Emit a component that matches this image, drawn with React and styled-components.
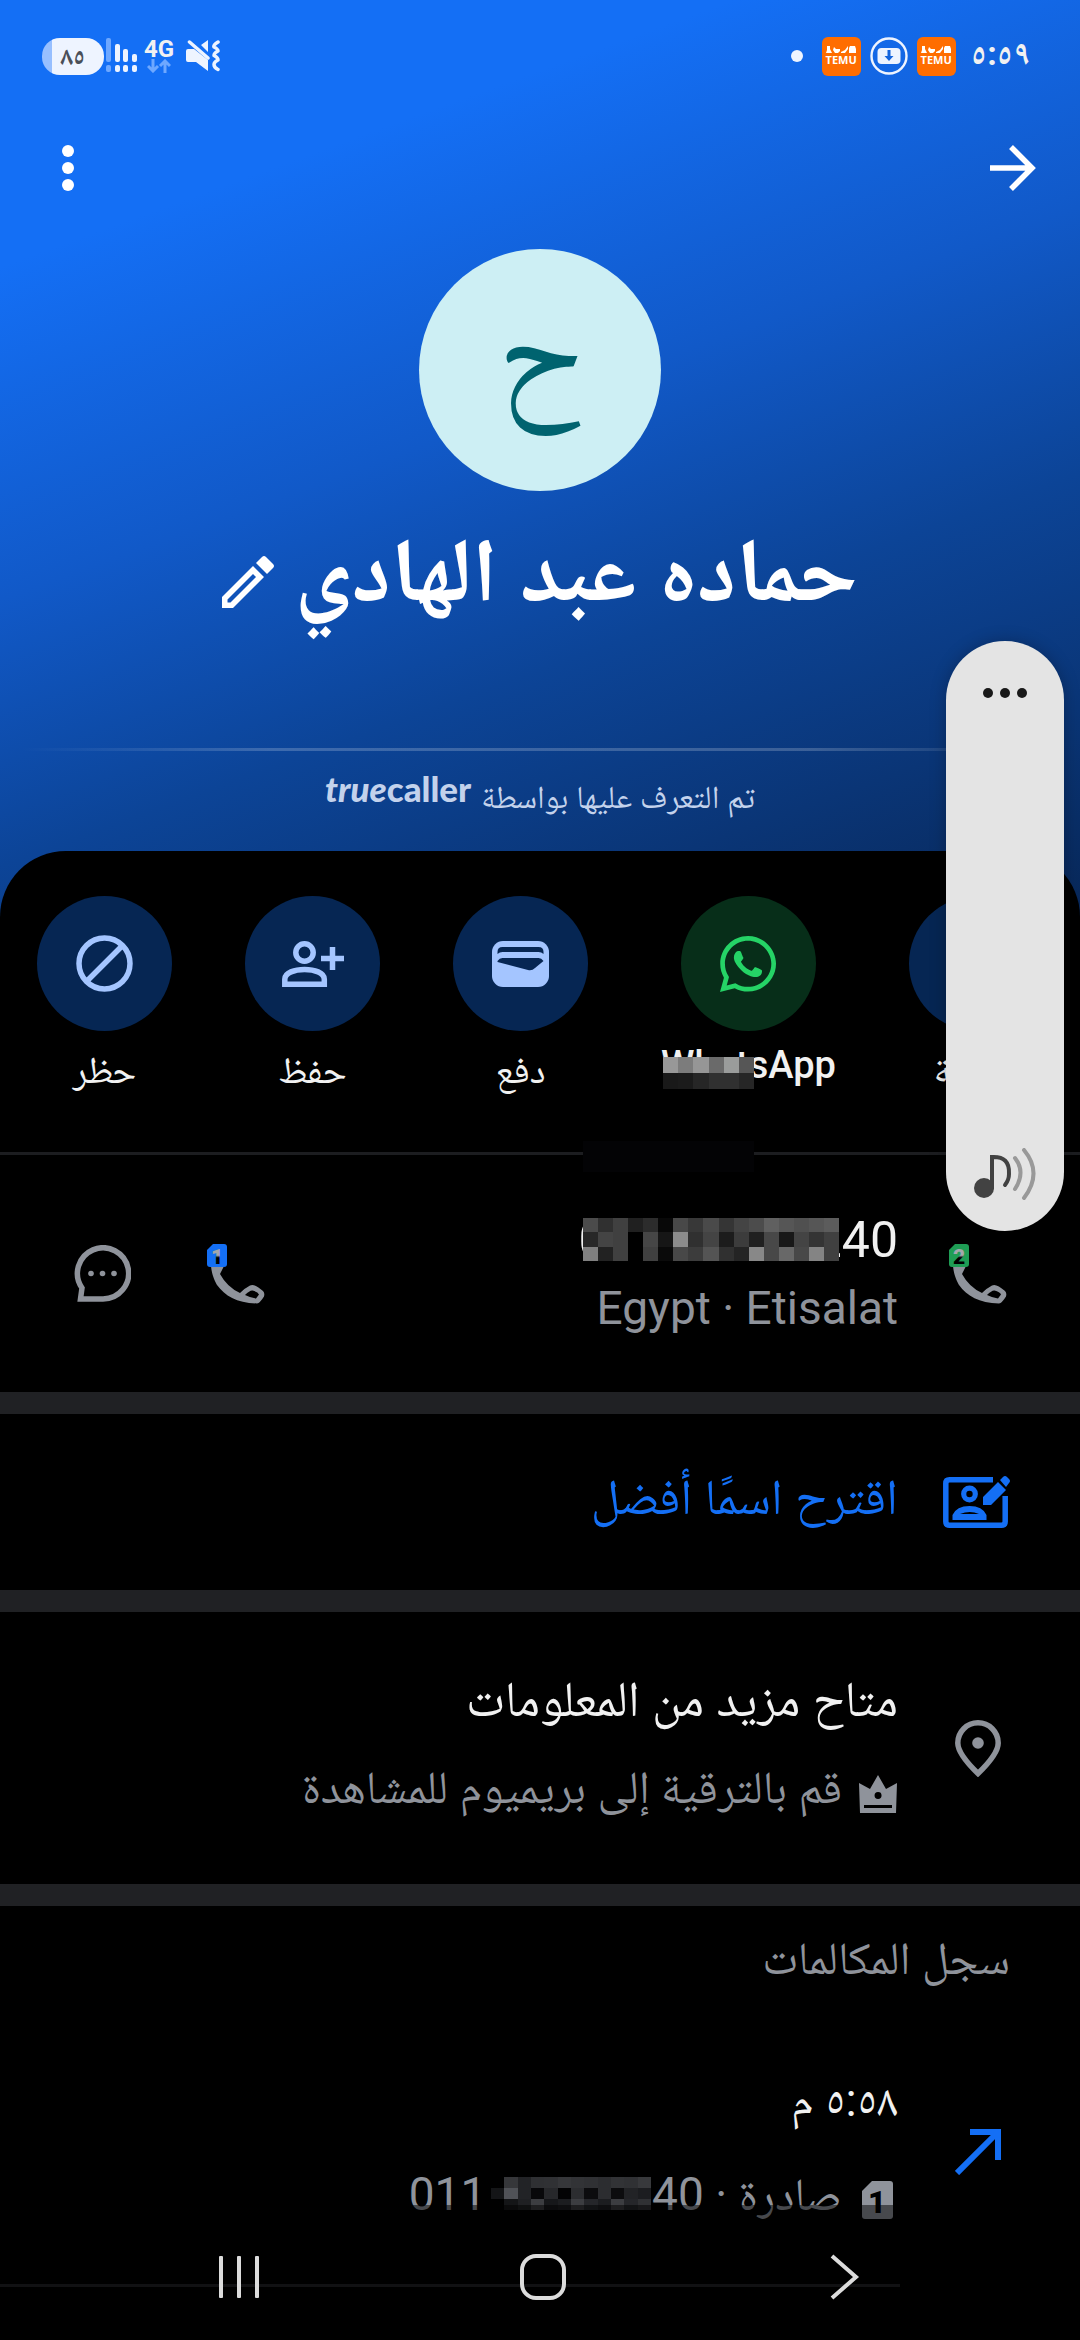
import React from 'react'
import styled, { createGlobalStyle } from 'styled-components'
import { FaWhatsapp } from 'react-icons/fa'

const GlobalStyle = createGlobalStyle`
  * {
    box-sizing: border-box;
  }

  body {
    margin: 0;
    background-color: #000;
    color: #f1f1f1;
    font-family: Roboto, 'Noto Naskh Arabic', 'Noto Sans Arabic', 'DejaVu Sans', sans-serif;
  }

  button {
    padding: 0;
    border: none;
    background: none;
    color: inherit;
    font: inherit;
    cursor: pointer;
  }

  svg {
    display: block;
    flex: none;
  }
`

const Screen = styled.div`
  position: relative;
  min-height: 100vh;
  overflow: hidden;
  background: linear-gradient(160deg, #146ff5 20%, #1159c8 45%, #0c4497 65%, #082655 100%) no-repeat;
  background-size: 100% 940px;
`

const StatusBar = styled.div`
  display: flex;
  justify-content: space-between;
  align-items: center;
  height: 112px;
  padding-inline: 50px 42px;
`

const StatusGroup = styled.div`
  display: flex;
  align-items: center;
  gap: ${props => props.$gap}px;
`

const Clock = styled.span`
  margin-inline-end: 6px;
  padding-bottom: 6px;
  font-size: 34px;
  line-height: 40px;
  font-weight: 700;
`

const AppBadge = styled.span`
  display: flex;
  flex-direction: column;
  align-items: center;
  justify-content: center;
  width: 39px;
  height: 39px;
  border-radius: 6px;
  background-color: #ff6d00;
  color: #fff;
  font: 700 11px/12px 'Open Sans', sans-serif;
`

const Dot = styled.span`
  width: 12px;
  height: 12px;
  margin-inline-start: 10px;
  border-radius: 50%;
  background-color: #eef4ff;
`

const Battery = styled.span`
  width: 62px;
  height: 37px;
  border-radius: 18px;
  background: linear-gradient(90deg, #97bfff 10px, #eef4ff 10px);
  color: #4a4f58;
  font-size: 26px;
  line-height: 37px;
  font-weight: 700;
  text-align: center;
`

const Network = styled.span`
  display: flex;
  flex-direction: column;
  align-items: center;
  margin-inline: 10px 4px;
  font: 700 24px/20px Roboto, sans-serif;
`

const Toolbar = styled.header`
  display: flex;
  justify-content: space-between;
  align-items: center;
  height: 112px;
  padding-inline: 44px 62px;
`

const Profile = styled.section`
  display: flex;
  flex-direction: column;
  align-items: center;
  padding-top: 25px;
`

const Avatar = styled.div`
  width: 242px;
  height: 242px;
  border-radius: 50%;
  background-color: #cdeff4;
  color: #00636f;
  font-size: 134px;
  line-height: 208px;
  text-align: center;
`

const NameRow = styled.div`
  display: flex;
  align-items: center;
  gap: 20px;
  margin-block: 30px 127px;
`

const Name = styled.h1`
  margin: 0;
  color: #fff;
  font-size: 90px;
  line-height: 100px;
  font-weight: 700;
`

const EditButton = styled.button`
  padding-top: 22px;
`

const FadeLine = styled.div`
  align-self: stretch;
  height: 3px;
  background: linear-gradient(90deg, transparent 2%, rgba(255, 255, 255, .2) 25%, rgba(255, 255, 255, .2) 75%, transparent 98%);
`

const Credit = styled.p`
  display: flex;
  align-items: center;
  gap: 10px;
  margin: 22px 0 30px;
  color: #c3d2ec;
  font-size: 32px;
  line-height: 48px;
`

const Brand = styled.span`
  padding-bottom: 18px;
  font: 900 35px/30px Lato, sans-serif;
  direction: ltr;

  i {
    font-weight: 900;
  }
`

const Sheet = styled.main`
  border-radius: 66px 66px 0 0;
  background-color: #000;
`

const Actions = styled.div`
  display: flex;
  align-items: flex-start;
  gap: 73px;
  direction: ltr;
  overflow: hidden;
  padding: 45px 37px 51px;
  border-bottom: 3px solid #1c1d20;
`

const Action = styled.button`
  position: relative;
  display: flex;
  flex: none;
  flex-direction: column;
  align-items: center;
  gap: 8px;
  min-width: 135px;
  font-size: 38px;
  line-height: 62px;
`

const ActionIcon = styled.span`
  display: grid;
  place-items: center;
  width: 135px;
  height: 135px;
  border-radius: 50%;
  background-color: ${props => props.$green ? '#072e19' : '#062653'};
  color: ${props => props.$green ? '#25d366' : '#a4c5ff'};
`

const LatinLabel = styled.span`
  line-height: 52px;
  font-weight: 500;
`

const Section = styled.section`
  display: flex;
  align-items: center;
  gap: 48px;
  min-height: ${props => props.$height}px;
  padding-inline: 70px;
  border-bottom: 22px solid #202124;
  color: #8f939b;
`

const IconSlot = styled.span`
  display: grid;
  place-items: center;
  flex: none;
  width: 64px;
`

const IconButton = styled.button`
  display: grid;
  place-items: center;
  flex: none;
  width: 64px;
  height: 96px;
`

const ButtonPair = styled.div`
  display: flex;
  gap: 70px;
`

const Texts = styled.div`
  flex: 1;
  min-width: 0;
`

/* arabic glyphs sit low in their line, so these blocks are lifted a little */
const ArabicTexts = styled(Texts)`
  padding-bottom: 10px;
`

const Line = styled.div`
  display: flex;
  align-items: center;
  gap: 16px;
  color: ${props => props.$muted ? '#8f939b' : '#f1f1f1'};
  font-size: ${props => props.$muted ? 46 : 50}px;
  line-height: ${props => props.$latin ? 68 : 88}px;

  > svg {
    margin-top: 14px;
  }
`

const PhoneNumber = styled.span`
  position: relative;
  display: inline-block;
  direction: ltr;
`

const Hidden = styled.span`
  display: inline-block;
  width: ${props => props.$width}px;
`

const Mosaic = styled.svg`
  position: absolute;
  left: ${props => props.$left}px;
  top: ${props => props.$top}px;
`

const SuggestLink = styled.a`
  padding-bottom: 10px;
  color: #146ff5;
  font-size: 50px;
  line-height: 88px;
  text-decoration: none;
`

const LogTitle = styled.h2`
  margin: 0;
  padding: 18px 70px 48px;
  color: #8f939b;
  font-size: 46px;
  line-height: 68px;
  font-weight: 400;
`

const LogRow = styled.div`
  display: flex;
  align-items: center;
  gap: 48px;
  padding: 16px 70px 36px;
`

const LogTime = styled.time`
  display: block;
  margin-bottom: 6px;
  font-size: 46px;
  line-height: 88px;
`

const LogDivider = styled.div`
  height: 3px;
  margin-inline-start: 180px;
  background-color: #222326;
`

const VolumePanel = styled.div`
  position: absolute;
  top: 641px;
  right: 16px;
  display: flex;
  flex-direction: column;
  justify-content: space-between;
  align-items: center;
  width: 118px;
  height: 590px;
  padding-block: 46px 31px;
  border-radius: 59px;
  background-color: #e4e4e4;
  box-shadow: 0 0 16px rgba(0, 0, 0, .25);
`

const NavBar = styled.nav`
  position: fixed;
  inset: auto 0 0;
  display: flex;
  justify-content: space-between;
  align-items: center;
  height: 135px;
  padding: 8px 205px 0 210px;
  background-color: rgba(0, 0, 0, .5);
  direction: ltr;

  button {
    width: 60px;
    height: 96px;
    display: grid;
    place-items: center;
  }
`

const numberCells = [
  '#4b4b4b #303030 #404040 #202020 #2c2c2c #080808 #484848 #383838 #4a4a4a #353535 #444444 #4c4c4c #606060 #565656 #505050 #565656 #5c5c5c',
  '#282828 #444444 #404040 #000000 #464646 #161616 #8c8c8c #303030 #444444 #1c1c1c #3c3c3c #202020 #484848 #181818 #444444 #343434 #404040',
  '#808080 #222222 #404040 #000000 #404040 #0a0a0a #484848 #3c3c3c #545454 #303030 #242424 #888888 #484848 #686868 #484848 #848484 #404040'
]

const logCells = [
  '#000000 #36373a #222326 #2f3033 #303134 #36373a #323336 #303134 #2c2d30 #323336 #303134 #38393c',
  '#141517 #505257 #222326 #08080a #27282b #030304 #2c2d30 #0c0c0e #2c2d30 #0c0c0e #222326 #1c1d20',
  '#000000 #141517 #1f2023 #3c3d41 #16171a #1c1d20 #3c3d41 #25262a #1c1d20 #3c3d41 #25262a #303134'
]

const labelCells = [
  '#989898 #7c7c7c #969696 #6a6a6a #9a9c9b #565656',
  '#191919 #1b1b1b #262626 #303030 #303030 #262626'
]

const dividerCells = ['#030305']

const Cells = ({rows, width, height, left, top}) => {
  const cols = rows[0].split(' ').length
  return (
    <Mosaic
      $left={left}
      $top={top}
      width={width}
      height={height}
      viewBox={`0 0 ${cols} ${rows.length}`}
      preserveAspectRatio="none"
      shapeRendering="crispEdges"
      aria-hidden="true"
    >
      {rows.map((row, y) => row.split(' ').map((color, x) => (
        <rect key={`${x}-${y}`} x={x} y={y} width="1" height="1" fill={color} />
      )))}
    </Mosaic>
  )
}

const TemuBadge = () => (
  <AppBadge>
    <svg width="30" height="8" viewBox="0 0 30 8" fill="#fff">
      <path d="M1 0h3v3l2 4H0l1-3zM8 1l2 2h4v2l-2 2H9L7 4zM15 6l4-2 3-4v3l-3 4h-4zM24 0h5l1 3v4h-7V2z" />
    </svg>
    TEMU
  </AppBadge>
)

const DownloadIcon = () => (
  <svg width="38" height="38" viewBox="0 0 38 38">
    <circle cx="19" cy="19" r="17.5" fill="none" stroke="#eef4ff" strokeWidth="2.4" />
    <rect x="7.5" y="11" width="23" height="16" rx="4" fill="#eef4ff" />
    <path d="M17.5 13h3v6h3L19 24l-4.5-5h3z" fill="#1565dd" />
  </svg>
)

const SignalIcon = () => (
  <svg width="32" height="36" viewBox="0 0 32 36" fill="#eef4ff">
    <g fill="#6ea8ff">
      <rect x="0" y="0" width="5" height="24" rx="2" />
      <rect x="0" y="27" width="5" height="7" rx="2" />
    </g>
    <rect x="9" y="6" width="5" height="18" rx="2" />
    <rect x="9" y="27" width="5" height="7" rx="2" />
    <rect x="17" y="11" width="5" height="13" rx="2" />
    <rect x="17" y="27" width="5" height="7" rx="2" />
    <rect x="26" y="16" width="5" height="8" rx="2" />
    <rect x="26" y="27" width="5" height="7" rx="2" />
  </svg>
)

const DataArrows = () => (
  <svg width="24" height="14" viewBox="0 0 24 14" fill="none" stroke="#6ea8ff" strokeWidth="3">
    <path d="M6 0v12M1 7l5 5 5-5M18 14V2M13 7l5-5 5 5" />
  </svg>
)

const MuteIcon = () => (
  <svg width="35" height="32" viewBox="0 0 35 32">
    <path d="M2 9h6L22 20v11L10 22H2Q0 22 0 20v-9Q0 9 2 9zM15 5l7-5v12z" fill="#eef4ff" />
    <path d="M3.5 2L22 18" stroke="#eef4ff" strokeWidth="3.5" strokeLinecap="round" />
    <path d="M32 2q-5 3-4 5 4 2 4 4-4 2-4 4.5 4 2 4 4.5-4 2-4 4.5 0 3 4 5" fill="none" stroke="#eef4ff" strokeWidth="3.5" strokeLinecap="round" strokeLinejoin="round" />
  </svg>
)

const MoreIcon = () => (
  <svg width="12" height="48" viewBox="0 0 12 48" fill="#fff">
    <circle cx="6" cy="7" r="6" />
    <circle cx="6" cy="24" r="6" />
    <circle cx="6" cy="41" r="6" />
  </svg>
)

const ForwardIcon = () => (
  <svg width="46" height="46" viewBox="0 0 46 46" fill="none" stroke="#fff" strokeWidth="5.5">
    <path d="M0 23h41M21 2l21 21-21 21" />
  </svg>
)

const PencilIcon = () => (
  <svg width="52" height="52" viewBox="0 0 52 52" fill="#fff" fillRule="evenodd">
    <path d="M0 41L31 10l11 11-31 31H0zM5.5 43.5v3h3L34 21l-3-3z" />
    <path d="M34 7l6-6q2-2 4 0l7 7q2 2 0 4l-6 6z" />
  </svg>
)

const BlockIcon = () => (
  <svg width="57" height="57" viewBox="0 0 57 57" fill="none" stroke="currentColor" strokeWidth="5.5">
    <circle cx="28.5" cy="28.5" r="25.5" />
    <path d="M11 46l35-35" />
  </svg>
)

const AddUserIcon = () => (
  <svg width="62" height="46" viewBox="0 0 62 46" fill="none" stroke="currentColor" strokeWidth="5.5">
    <circle cx="22.5" cy="11.5" r="8.7" />
    <path d="M2.8 43.2v-5c0-13 39.5-13 39.5 0v5z" />
    <path d="M39 17.5h23M50.5 6v23" />
  </svg>
)

const WalletIcon = () => (
  <svg width="57" height="46" viewBox="0 0 57 46">
    <rect width="57" height="46" rx="11" fill="currentColor" />
    <path d="M5.5 13V11q0-5 5-5h36q5 0 5 5v2q-2-2-5-2h-36q-3 0-5 2zM5.5 20q2-3 5-3h36q3 0 5 3L43 27q-3 3-7 2L5.5 21z" fill="#062653" />
  </svg>
)

const ChatIcon = () => (
  <svg width="57" height="57" viewBox="0 0 57 57">
    <path d="M6.5 54H29A25.6 25.6 0 1 0 8 43z" fill="none" stroke="#8f939b" strokeWidth="5.5" />
    <g fill="#8f939b">
      <circle cx="17" cy="28.5" r="2.8" />
      <circle cx="28.5" cy="28.5" r="2.8" />
      <circle cx="40" cy="28.5" r="2.8" />
    </g>
  </svg>
)

const SimShape = ({color, digit, id}) => (
  <>
    <defs>
      <linearGradient id={id} x1="0" y1="0" x2="0" y2="1">
        <stop offset=".45" stopColor="#a3a7ad" />
        <stop offset=".55" stopColor="#000" />
      </linearGradient>
    </defs>
    <path d="M6 0h11q3 0 3 3v17q0 3-3 3H3q-3 0-3-3V6z" fill={color} />
    <text x="10" y="19.5" textAnchor="middle" fontFamily="Roboto" fontWeight="900" fontSize="21" fill={`url(#${id})`}>{digit}</text>
  </>
)

const SimCallIcon = ({color, digit}) => (
  <svg width="58" height="60" viewBox="0 0 58 60">
    <path
      fill="#8f939b"
      fillRule="evenodd"
      d="M4 22C5 32 8 37 10 41C18 52 30 59 50 59.5Q53 59 57 52.5Q58 49 56 47Q47 39 43 41.5Q38 44 33 49Q20 43 13 30L17 22zM38 51Q43 46 45.5 46.5Q51 48 52 50.5L49 54.5Q44 54 38 51z"
    />
    <SimShape color={color} digit={digit} id={`sim-${digit}`} />
  </svg>
)

const SuggestIcon = () => (
  <svg width="67" height="52" viewBox="0 0 67 52">
    <path d="M50 3.8H6.5q-3.7 0-3.7 3.7v38q0 3.7 3.7 3.7h52q3.7 0 3.7-3.7V20" fill="none" stroke="#146ff5" strokeWidth="5.5" />
    <path d="M51 0h16v20H55z" fill="#000" />
    <path d="M40 29v-8L55 6l8 8-15 15zM57 4l3-3q2-2 4 0l2 2q2 2 0 4l-3 4z" fill="#146ff5" />
    <circle cx="26.5" cy="18" r="5.8" fill="none" stroke="#146ff5" strokeWidth="5.2" />
    <path d="M9.500 44v-5q4-9 17-9t17 9v5zM17 38h19q-9-4-19 0z" fill="#146ff5" fillRule="evenodd" />
  </svg>
)

const PinIcon = () => (
  <svg width="46" height="57" viewBox="0 0 46 57">
    <path d="M23 53.5Q2.8 34 2.8 23a20.2 20.2 0 0 1 40.4 0Q43.2 34 23 53.5z" fill="none" stroke="#8f939b" strokeWidth="5.5" />
    <circle cx="23" cy="23" r="5.8" fill="#8f939b" />
  </svg>
)

const CrownIcon = () => (
  <svg width="40" height="38" viewBox="-1 0 40 38">
    <path d="M0 8l11 6 8-14 8 14 11-6-1 30H1zM5 30v3h28v-3zM19 17a3.5 3.5 0 1 0 .1 7a3.5 3.5 0 0 0-.1-7z" fill="#8f939b" fillRule="evenodd" />
  </svg>
)

const OutgoingIcon = () => (
  <svg width="46" height="46" viewBox="0 0 46 46" fill="none" stroke="#146ff5" strokeWidth="6">
    <path d="M2 44L42 4M15 3h28v28" />
  </svg>
)

const SimIcon = () => (
  <svg width="40" height="44" viewBox="-4 -2 40 44">
    <path d="M10 0h18q3 0 3 3v32q0 3-3 3H3q-3 0-3-3V10z" fill="#8f939b" />
    <text x="15" y="32" textAnchor="middle" fontFamily="Roboto" fontWeight="900" fontSize="31" fill="#000">1</text>
  </svg>
)

const DotsIcon = () => (
  <svg width="46" height="12" viewBox="0 0 46 12" fill="#191919">
    <circle cx="6" cy="6" r="5" />
    <circle cx="23" cy="6" r="5" />
    <circle cx="40" cy="6" r="5" />
  </svg>
)

const SoundIcon = () => (
  <svg width="62" height="52" viewBox="0 0 62 52" fill="none" strokeWidth="4" strokeLinecap="round">
    <circle cx="10" cy="40" r="10" fill="#424242" />
    <path d="M18 40V9q18-1 17 17 0 6-4 11" stroke="#424242" />
    <path d="M41 10q11 14 0 31" stroke="#999" />
    <path d="M50 2q19 23 0 48" stroke="#999" />
  </svg>
)

const App = () => {
  return (
    <>
      <GlobalStyle />
      <Screen dir="rtl">
        <StatusBar>
          <StatusGroup $gap={9}>
            <Clock>٥:٥٩</Clock>
            <TemuBadge />
            <DownloadIcon />
            <TemuBadge />
            <Dot />
          </StatusGroup>
          <StatusGroup $gap={2}>
            <MuteIcon />
            <Network>
              4G
              <DataArrows />
            </Network>
            <SignalIcon />
            <Battery>٨٥</Battery>
          </StatusGroup>
        </StatusBar>
        <Toolbar>
          <button aria-label="رجوع"><ForwardIcon /></button>
          <button aria-label="المزيد"><MoreIcon /></button>
        </Toolbar>

        <Profile>
          <Avatar>ح</Avatar>
          <NameRow>
            <Name>حماده عبد الهادي</Name>
            <EditButton aria-label="تعديل"><PencilIcon /></EditButton>
          </NameRow>
          <FadeLine />
          <Credit>
            تم التعرف عليها بواسطة
            <Brand><i>true</i>caller</Brand>
          </Credit>
        </Profile>

        <Sheet>
          <Actions>
            <Action>
              <ActionIcon><BlockIcon /></ActionIcon>
              حظر
            </Action>
            <Action>
              <ActionIcon><AddUserIcon /></ActionIcon>
              حفظ
            </Action>
            <Action>
              <ActionIcon><WalletIcon /></ActionIcon>
              دفع
            </Action>
            <Action>
              <ActionIcon $green><FaWhatsapp size={64} /></ActionIcon>
              <LatinLabel>WhatsApp</LatinLabel>
              <Cells rows={labelCells} width={91} height={32} left={2} top={161} />
            </Action>
            <Action>
              <ActionIcon />
              مكالمة
            </Action>
          </Actions>

          <Section $height={259}>
            <IconButton aria-label="اتصال ٢"><SimCallIcon color="#1f9d55" digit="2" /></IconButton>
            <Texts>
              <Line $latin>
                <PhoneNumber>
                  011<Hidden $width={151} />240
                  <Cells rows={numberCells} width={256} height={43} left={5} top={12} />
                  <Cells rows={dividerCells} width={171} height={31} left={5} top={-65} />
                </PhoneNumber>
              </Line>
              <Line $muted $latin><span dir="ltr">Egypt · Etisalat</span></Line>
            </Texts>
            <ButtonPair>
              <IconButton aria-label="اتصال ١"><SimCallIcon color="#146ff5" digit="1" /></IconButton>
              <IconButton aria-label="رسالة"><ChatIcon /></IconButton>
            </ButtonPair>
          </Section>

          <Section $height={198}>
            <IconSlot><SuggestIcon /></IconSlot>
            <SuggestLink href="#suggest">اقترح اسمًا أفضل</SuggestLink>
          </Section>

          <Section $height={294}>
            <IconSlot><PinIcon /></IconSlot>
            <ArabicTexts>
              <Line>متاح مزيد من المعلومات</Line>
              <Line $muted>
                <CrownIcon />
                قم بالترقية إلى بريميوم للمشاهدة
              </Line>
            </ArabicTexts>
          </Section>

          <LogTitle>سجل المكالمات</LogTitle>
          <LogRow>
            <IconSlot><OutgoingIcon /></IconSlot>
            <ArabicTexts>
              <LogTime>٥:٥٨ م</LogTime>
              <Line $muted>
                <SimIcon />
                <span>
                  صادرة · <PhoneNumber>
                    011<Hidden $width={140} />240
                    <Cells rows={logCells} width={160} height={33} left={82} top={27} />
                  </PhoneNumber>
                </span>
              </Line>
            </ArabicTexts>
          </LogRow>
          <LogDivider />
        </Sheet>

        <VolumePanel>
          <button aria-label="خيارات الصوت"><DotsIcon /></button>
          <SoundIcon />
        </VolumePanel>

        <NavBar>
          <button aria-label="التطبيقات الأخيرة">
            <svg width="42" height="42" viewBox="0 0 42 42" fill="#dcdcdc">
              <rect x="0" width="4" height="42" rx="1" />
              <rect x="18" width="4" height="42" rx="1" />
              <rect x="36" width="4" height="42" rx="1" />
            </svg>
          </button>
          <button aria-label="الرئيسية">
            <svg width="46" height="46" viewBox="0 0 46 46">
              <rect x="2" y="2" width="42" height="42" rx="14" fill="none" stroke="#dcdcdc" strokeWidth="4" />
            </svg>
          </button>
          <button aria-label="رجوع للخلف">
            <svg width="30" height="46" viewBox="0 0 30 46" fill="none" stroke="#dcdcdc" strokeWidth="4">
              <path d="M2 2l24 21L2 44" />
            </svg>
          </button>
        </NavBar>
      </Screen>
    </>
  )
}

export default App
